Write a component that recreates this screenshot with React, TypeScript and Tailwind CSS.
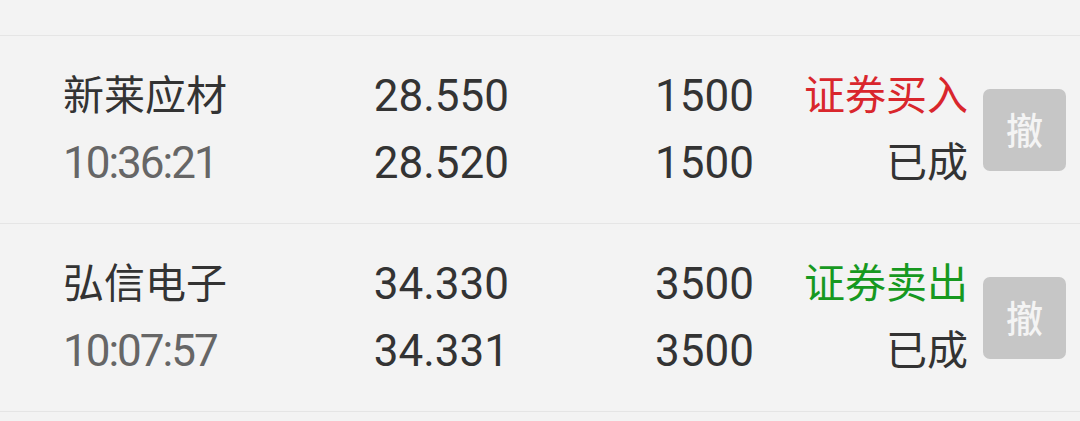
const ORDERS = [
  {
    name: "新莱应材",
    time: "10:36:21",
    price: "28.550",
    dealPrice: "28.520",
    qty: "1500",
    dealQty: "1500",
    side: "证券买入",
    buy: true,
    status: "已成",
  },
  {
    name: "弘信电子",
    time: "10:07:57",
    price: "34.330",
    dealPrice: "34.331",
    qty: "3500",
    dealQty: "3500",
    side: "证券卖出",
    buy: false,
    status: "已成",
  },
];

// Roboto first so the line box uses its metrics; CJK glyphs fall back to Noto
const cjk = "font-['Roboto','Noto_Sans_CJK_SC',sans-serif] text-[41px]";
const num = "font-['Roboto','Noto_Sans_CJK_SC',sans-serif] text-[44px]";

export default function App() {
  return (
    <div className="w-[1080px] h-[421px] overflow-hidden bg-[#f3f3f3] text-[#333333]">
      <div className="h-[35px]" />
      {ORDERS.map((o) => (
        <div
          key={o.name}
          className="h-[188px] border-t border-[#e5e5e5] flex items-center pl-[63px] pr-[14px]"
        >
          {/* name + time */}
          <div className="w-[237px] leading-[67px]">
            <div className={cjk}>{o.name}</div>
            <div className={`${num} text-[#666666] tracking-[-2px]`}>{o.time}</div>
          </div>

          {/* price */}
          <div className={`w-[209px] text-right leading-[67px] ${num}`}>
            <div>{o.price}</div>
            <div>{o.dealPrice}</div>
          </div>

          {/* quantity */}
          <div className={`w-[245px] text-right leading-[67px] ${num}`}>
            <div>{o.qty}</div>
            <div>{o.dealQty}</div>
          </div>

          {/* side + status */}
          <div className={`w-[214px] text-right leading-[67px] ${cjk}`}>
            <div className={o.buy ? "text-[#d9262c]" : "text-[#17991f]"}>{o.side}</div>
            <div>{o.status}</div>
          </div>

          <button className="ml-[15px] w-[83px] h-[82px] rounded-[7px] bg-[#c6c6c6] text-[#f4f4f4] font-['Noto_Sans_CJK_SC',sans-serif] text-[37px] font-medium flex items-center justify-center">
            撤
          </button>
        </div>
      ))}
      <div className="border-t border-[#e5e5e5]" />
    </div>
  );
}
